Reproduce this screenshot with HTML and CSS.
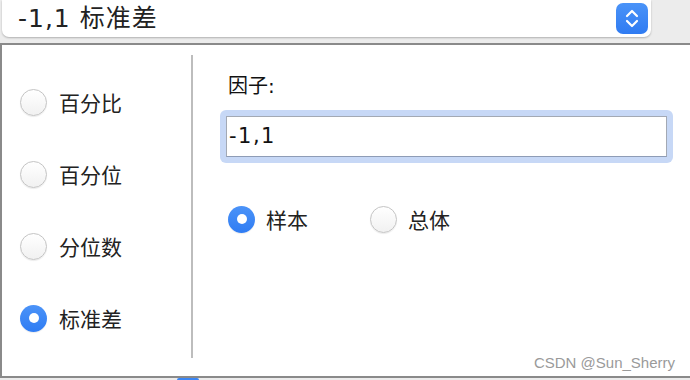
FILE: index.html
```html
<!DOCTYPE html>
<html lang="zh-CN">
<head>
    <meta charset="UTF-8">
    <title>标准差</title>
    <link rel="stylesheet" href="styles.css">
</head>
<body>
    <!-- 下拉框 -->
    <div class="popup">
        <span class="popup-text">-1,1 标准差</span>
        <span class="stepper">
            <svg width="32" height="31" viewBox="0 0 32 31">
                <path d="M11 13 L16 8 L21 13" fill="none" stroke="#fff" stroke-width="2.2" stroke-linecap="round" stroke-linejoin="round"/>
                <path d="M11 18 L16 23 L21 18" fill="none" stroke="#fff" stroke-width="2.2" stroke-linecap="round" stroke-linejoin="round"/>
            </svg>
        </span>
    </div>

    <div class="panel">
        <!-- 左侧选项 -->
        <div class="options">
            <div class="option"><span class="radio"></span><span class="label">百分比</span></div>
            <div class="option"><span class="radio"></span><span class="label">百分位</span></div>
            <div class="option"><span class="radio"></span><span class="label">分位数</span></div>
            <div class="option"><span class="radio checked"></span><span class="label">标准差</span></div>
        </div>

        <div class="divider"></div>

        <!-- 右侧设置 -->
        <div class="settings">
            <div class="field-label">因子:</div>
            <div class="focus-ring">
                <div class="text-input">-1,1</div>
            </div>
            <div class="choice-row">
                <div class="choice first"><span class="radio checked"></span><span class="label">样本</span></div>
                <div class="choice"><span class="radio"></span><span class="label">总体</span></div>
            </div>
        </div>
    </div>

    <div class="peek"></div>

    <div class="watermark">CSDN @Sun_Sherry</div>
</body>
</html>
```

FILE: styles.css
```css
* {
    margin: 0;
    padding: 0;
    box-sizing: border-box;
}

body {
    width: 690px;
    height: 380px;
    overflow: hidden;
    background: #ececec;
    font-family: "DejaVu Sans", "Noto Sans CJK SC", sans-serif;
    color: #222;
    position: relative;
}

.popup {
    margin-left: 2px;
    width: 649px;
    height: 37px;
    background: #fff;
    border-radius: 0 0 7px 7px;
    box-shadow: 0 1px 2px rgba(0, 0, 0, 0.25);
    display: flex;
    align-items: center;
    justify-content: space-between;
    padding: 0 3px 0 16px;
}

.popup-text {
    font-size: 25px;
    line-height: 32px;
    letter-spacing: 1px;
    color: #222;
}

.stepper {
    width: 32px;
    height: 31px;
    border-radius: 7px;
    background: linear-gradient(#4a93f8, #2f7bf2);
    display: flex;
}

.panel {
    margin-top: 6px;
    height: 335px;
    background: #fff;
    border-top: 2px solid #8a8a8a;
    border-left: 2px solid #8a8a8a;
    border-bottom: 2px solid #8a8a8a;
    display: flex;
}

.options {
    width: 189px;
    padding: 21px 0 0 18px;
}

.option {
    height: 72px;
    display: flex;
    align-items: center;
}

.radio {
    width: 27px;
    height: 27px;
    border-radius: 50%;
    border: 1px solid #c4c4c4;
    background: linear-gradient(#ffffff, #f1f1f1);
    box-shadow: 0 1px 1px rgba(0, 0, 0, 0.08);
    display: flex;
    align-items: center;
    justify-content: center;
    flex-shrink: 0;
}

.radio.checked {
    border: none;
    background: linear-gradient(#4b93f8, #2f7cf3);
}

.radio.checked::after {
    content: "";
    width: 10px;
    height: 10px;
    border-radius: 50%;
    background: #fff;
}

.label {
    font-size: 21px;
    margin-left: 12px;
    color: #222;
}

.divider {
    width: 2px;
    margin: 10px 0 18px;
    background: #bdbdbd;
}

.settings {
    flex: 1;
    padding: 29px 0 0 27px;
}

.field-label {
    font-size: 20px;
    line-height: 24px;
    padding-left: 8px;
    margin-bottom: 12px;
    color: #111;
}

.focus-ring {
    width: 453px;
    padding: 6px;
    border-radius: 6px;
    background: #c7d8f6;
}

.text-input {
    height: 41px;
    background: #fff;
    border: 1px solid #a3a9b4;
    border-bottom-color: #8e9cb6;
    font-size: 21px;
    line-height: 38px;
    letter-spacing: 1.5px;
    padding-left: 2px;
    color: #111;
}

.choice-row {
    margin-top: 41px;
    padding-left: 8px;
    display: flex;
}

.choice {
    display: flex;
    align-items: center;
}

.choice.first {
    width: 142px;
}

.choice .label {
    margin-left: 11px;
}

.peek {
    margin-left: 177px;
    width: 22px;
    height: 2px;
    background: #3a86f5;
    border-radius: 2px 2px 0 0;
}

.watermark {
    position: absolute;
    right: 15px;
    top: 354px;
    font-family: "Liberation Sans", Arial, sans-serif;
    font-size: 15px;
    color: #9a9a9a;
}
```
